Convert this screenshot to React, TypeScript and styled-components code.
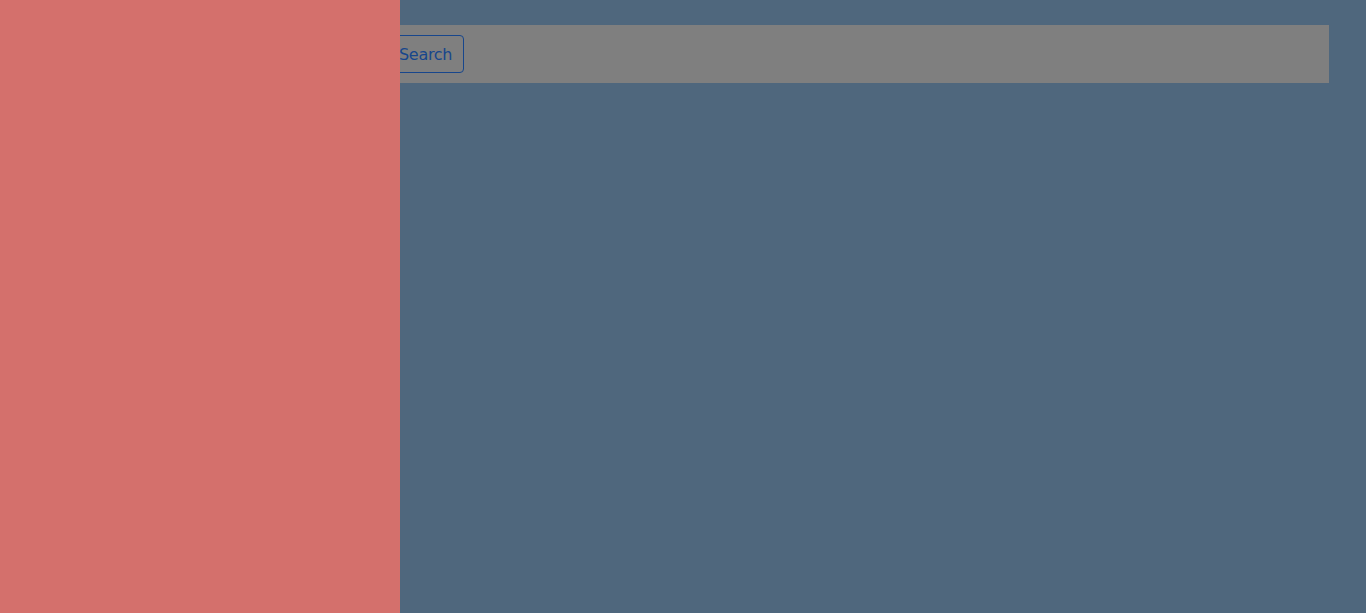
import * as React from 'react'
import styled, { createGlobalStyle } from 'styled-components'

const GlobalStyle = createGlobalStyle`
    html, body {
        margin: 0;
        padding: 0;
        height: 100%;
        background: #4f677d;
    }
    #root {
        min-height: 100%;
    }
`

export default function App() {
    return (
        <Page>
            <GlobalStyle />
            <Header>
                <SearchInput type="text" placeholder="Search..." />
                <SearchButton>Search</SearchButton>
            </Header>
            <Drawer />
        </Page>
    )
}

const Page = styled.div`
    min-height: 613px;
    background: #4f677d;
    overflow: hidden;
    padding-top: 25px;
    box-sizing: border-box;
    font-family: "DejaVu Sans", sans-serif;
`

const Header = styled.div`
    display: flex;
    align-items: center;
    gap: 6px;
    height: 58px;
    margin: 0 37px;
    padding: 0 10px;
    box-sizing: border-box;
    background: #7f7f7f;
`

const SearchInput = styled.input`
    width: 334px;
    height: 38px;
    box-sizing: border-box;
    border: 1px solid #17468c;
    border-radius: 4px;
    background: transparent;
`

const SearchButton = styled.button`
    height: 38px;
    padding: 0 11px;
    box-sizing: border-box;
    border: 1px solid #17468c;
    border-radius: 4px;
    background: transparent;
    color: #17468c;
    font-family: "DejaVu Sans", sans-serif;
    font-size: 16px;
    letter-spacing: -0.3px;
`

const Drawer = styled.aside`
    position: fixed;
    top: 0;
    left: 0;
    width: 400px;
    height: 100%;
    background: #d4706c;
`
